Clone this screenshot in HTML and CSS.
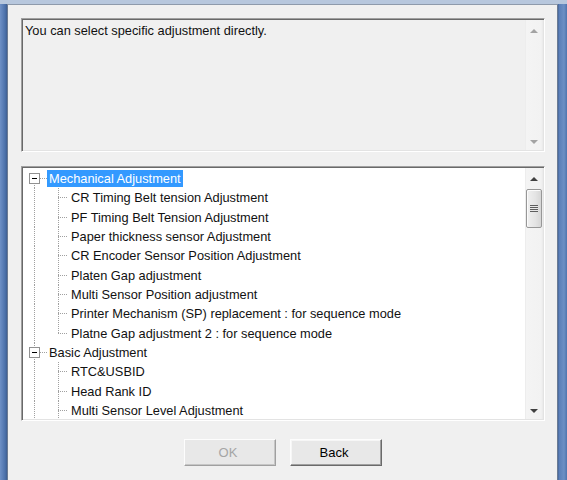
FILE: index.html
```html
<!DOCTYPE html>
<html lang="en">
<head>
    <meta charset="UTF-8">
    <title>Adjustment</title>
    <link rel="stylesheet" href="styles.css">
</head>
<body>
    <div class="window">
        <div class="dialog">
            <!-- Description box -->
            <div class="memo sunken">
                <div class="memo-text">You can select specific adjustment directly.</div>
                <div class="vscroll disabled">
                    <div class="sb-btn"><span class="arrow up"></span></div>
                    <div class="sb-track"></div>
                    <div class="sb-btn bottom"><span class="arrow down"></span></div>
                </div>
            </div>

            <!-- Adjustment tree -->
            <div class="tree sunken">
                <div class="tree-list">
                    <div class="row root first">
                        <span class="gutter"><svg class="expander" width="11" height="11" viewBox="0 0 11 11"><rect x="0.5" y="0.5" width="10" height="10" fill="#fff" stroke="#919191"/><line x1="3" y1="5.5" x2="8" y2="5.5" stroke="#000"/></svg></span>
                        <span class="label selected">Mechanical Adjustment</span>
                    </div>
                    <div class="row child"><span class="gutter"></span><span class="branch"></span><span class="label">CR Timing Belt tension Adjustment</span></div>
                    <div class="row child"><span class="gutter"></span><span class="branch"></span><span class="label">PF Timing Belt Tension Adjustment</span></div>
                    <div class="row child"><span class="gutter"></span><span class="branch"></span><span class="label">Paper thickness sensor Adjustment</span></div>
                    <div class="row child"><span class="gutter"></span><span class="branch"></span><span class="label">CR Encoder Sensor Position Adjustment</span></div>
                    <div class="row child"><span class="gutter"></span><span class="branch"></span><span class="label">Platen Gap adjustment</span></div>
                    <div class="row child"><span class="gutter"></span><span class="branch"></span><span class="label">Multi Sensor Position adjustment</span></div>
                    <div class="row child"><span class="gutter"></span><span class="branch"></span><span class="label">Printer Mechanism (SP) replacement : for sequence mode</span></div>
                    <div class="row child last"><span class="gutter"></span><span class="branch"></span><span class="label">Platne Gap adjustment 2 : for sequence mode</span></div>
                    <div class="row root">
                        <span class="gutter"><svg class="expander" width="11" height="11" viewBox="0 0 11 11"><rect x="0.5" y="0.5" width="10" height="10" fill="#fff" stroke="#919191"/><line x1="3" y1="5.5" x2="8" y2="5.5" stroke="#000"/></svg></span>
                        <span class="label">Basic Adjustment</span>
                    </div>
                    <div class="row child"><span class="gutter"></span><span class="branch"></span><span class="label">RTC&amp;USBID</span></div>
                    <div class="row child"><span class="gutter"></span><span class="branch"></span><span class="label">Head Rank ID</span></div>
                    <div class="row child"><span class="gutter"></span><span class="branch"></span><span class="label">Multi Sensor Level Adjustment</span></div>
                </div>
                <div class="vscroll">
                    <div class="sb-btn"><span class="arrow up"></span></div>
                    <div class="sb-track">
                        <div class="thumb"><span class="grip"></span></div>
                    </div>
                    <div class="sb-btn bottom"><span class="arrow down"></span></div>
                </div>
            </div>

            <div class="buttons">
                <button disabled>OK</button>
                <button>Back</button>
            </div>
        </div>
    </div>
</body>
</html>
```

FILE: styles.css
```css
body {
    margin: 0;
    font-family: "Liberation Sans", Arial, sans-serif;
    background: #5b7fb7;
}
.window {
    height: 480px;
    box-sizing: border-box;
    padding: 4px 9px 0 7px;
    background: linear-gradient(to bottom, #b7c7dd 0, #b7c7dd 4px, transparent 4px),
                linear-gradient(to right, #6e90c6 0, #4d72ab 5px, #3f5f92 7px, #3f5f92 558px, #5a7eb7 559px, #6d8fc4 564px, #4f74ad 567px);
}
.dialog {
    height: 100%;
    box-sizing: border-box;
    background: #f0f0f0;
    border-top: 1px solid #8e9aab;
    border-left: 1px solid #6b7b93;
    border-right: 1px solid #6b7b93;
    padding: 13px 12px 0 13px;
    display: flex;
    flex-direction: column;
}
.sunken {
    display: flex;
    border: 1px solid;
    border-color: #a0a0a0 #fff #fff #a0a0a0;
    box-shadow: inset 1px 1px 0 #696969, inset -1px -1px 0 #e3e3e3;
    padding: 1px;
}
.memo {
    height: 134px;
    box-sizing: border-box;
    background: #f0f0f0;
}
.memo-text {
    flex: 1;
    font-size: 12.8px;
    line-height: 15px;
    padding: 3px 2px;
    color: #111;
}
.tree {
    margin-top: 14px;
    height: 255px;
    box-sizing: border-box;
    background: #fff;
}
.tree-list {
    flex: 1;
    overflow: hidden;
    padding-top: 1px;
}
.row {
    display: flex;
    align-items: center;
    height: 19.33px;
    font-size: 12.8px;
    white-space: nowrap;
}
.gutter {
    width: 24px;
    height: 100%;
    flex: none;
    display: flex;
    align-items: center;
    background: repeating-linear-gradient(to bottom, #a0a0a0 0 1px, transparent 1px 2px) no-repeat 11px 0 / 1px 100%;
}
.root .gutter {
    background:
        repeating-linear-gradient(to right, #a0a0a0 0 1px, transparent 1px 2px) no-repeat 17px 50% / 7px 1px,
        repeating-linear-gradient(to bottom, #a0a0a0 0 1px, transparent 1px 2px) no-repeat 11px 0 / 1px 100%;
}
.root.first .gutter {
    background:
        repeating-linear-gradient(to right, #a0a0a0 0 1px, transparent 1px 2px) no-repeat 17px 50% / 7px 1px,
        repeating-linear-gradient(to bottom, #a0a0a0 0 1px, transparent 1px 2px) no-repeat 11px 100% / 1px 50%;
}
.expander {
    margin-left: 6px;
    display: block;
}
.branch {
    width: 22px;
    height: 100%;
    flex: none;
    background:
        repeating-linear-gradient(to right, #a0a0a0 0 1px, transparent 1px 2px) no-repeat 11px 50% / 10px 1px,
        repeating-linear-gradient(to bottom, #a0a0a0 0 1px, transparent 1px 2px) no-repeat 11px 0 / 1px 100%;
}
.last .branch {
    background:
        repeating-linear-gradient(to right, #a0a0a0 0 1px, transparent 1px 2px) no-repeat 11px 50% / 10px 1px,
        repeating-linear-gradient(to bottom, #a0a0a0 0 1px, transparent 1px 2px) no-repeat 11px 0 / 1px 50%;
}
.label {
    padding: 0 2px;
    line-height: 17px;
    color: #111;
}
.label.selected {
    background: #3399ff;
    color: #fff;
}
.vscroll {
    width: 18px;
    flex: none;
    display: flex;
    flex-direction: column;
    background: linear-gradient(to right, #e6e6e6 0, #f4f4f4 1px, #f2f2f2 16px, #e9e9e9 18px);
}
.sb-btn {
    height: 21px;
    display: flex;
    align-items: center;
    justify-content: center;
}
.sb-btn.bottom {
    height: 17px;
}
.sb-track {
    flex: 1;
    padding: 0 1px;
}
.arrow {
    width: 0;
    height: 0;
    border-left: 4px solid transparent;
    border-right: 4px solid transparent;
}
.arrow.up {
    border-bottom: 4px solid #404040;
}
.arrow.down {
    border-top: 4px solid #404040;
}
.disabled .arrow.up { border-bottom-color: #a3a3a3; }
.disabled .arrow.down { border-top-color: #a3a3a3; }
.thumb {
    height: 39px;
    box-sizing: border-box;
    border: 1px solid #979797;
    border-radius: 2px;
    background: linear-gradient(to right, #f0f0f0, #e4e4e4 60%, #d6d6d6);
    box-shadow: inset 1px 1px 0 #fbfbfb;
    display: flex;
    align-items: center;
    justify-content: center;
}
.grip {
    width: 8px;
    height: 7px;
    background: repeating-linear-gradient(to bottom, #5e5e5e 0 1px, #e8e8e8 1px 2px);
}
.buttons {
    display: flex;
    justify-content: center;
    gap: 14px;
    margin-top: 18px;
}
button {
    width: 92px;
    height: 27px;
    font-family: "Liberation Sans", Arial, sans-serif;
    font-size: 13px;
    color: #000;
    background: #e8e8e8;
    border: 1px solid;
    border-color: #fdfdfd #6a6a6a #6a6a6a #fdfdfd;
    box-shadow: inset -1px -1px 0 #a0a0a0, inset 1px 1px 0 #f6f6f6;
    padding: 0 4px 0 0;
}
button:disabled {
    color: #a5a5a5;
    border-color: #fdfdfd #a0a0a0 #a0a0a0 #fdfdfd;
    box-shadow: inset -1px -1px 0 #c6c6c6;
}
```
